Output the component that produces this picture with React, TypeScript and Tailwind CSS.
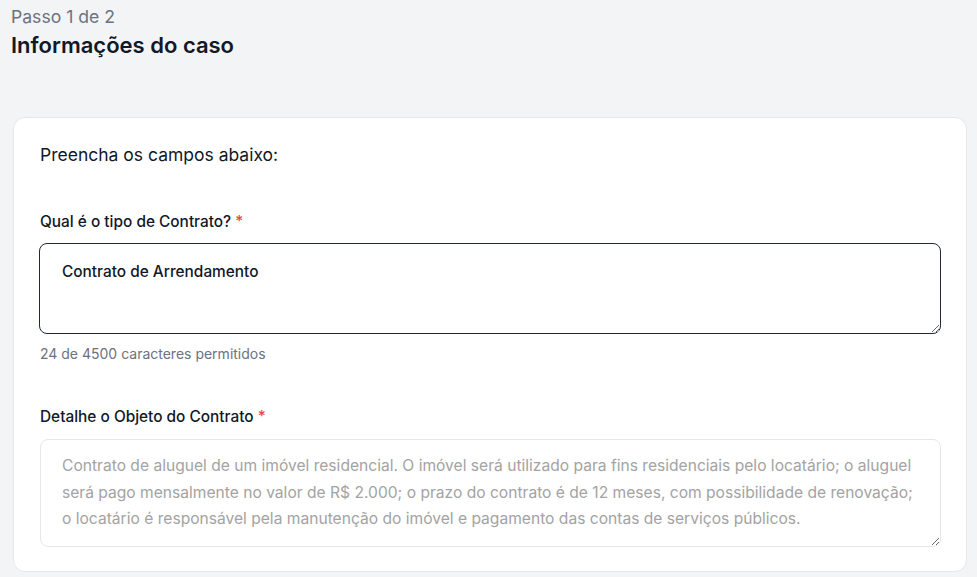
export default function App() {
  return (
    <div
      className="min-h-[577px] bg-[#f3f4f6] pt-[6px] pb-[6px]"
      style={{ fontFamily: 'Inter, "Noto Sans", sans-serif' }}
    >
      <div className="px-[11px]">
        <p className="text-[17.6px] leading-[22px] text-[#6b7280]">Passo 1 de 2</p>
        <h1 className="mt-[3px] text-[22px] leading-[28px] font-semibold text-[#111827]">
          Informações do caso
        </h1>
      </div>

      <div className="ml-[13px] mr-[10px] mt-[58px] rounded-[12px] border border-[#e5e7eb] bg-white px-[25px] pt-[25px] pb-[24px]">
        <p className="pl-[1px] text-[17.5px] leading-[24px] text-[#111827]">Preencha os campos abaixo:</p>

        <label className="mt-[45px] block pl-[1px] text-[15.4px] leading-[20px] font-medium text-[#111827]">
          Qual é o tipo de Contrato? <span className="text-[#ef4444]">*</span>
        </label>
        <textarea
          autoFocus
          defaultValue="Contrato de Arrendamento"
          className="mt-[11px] block h-[91px] w-full rounded-[8px] border-[1.5px] border-[#1f2937] bg-white px-[22px] pt-[16px] text-[15.4px] leading-[24px] font-medium text-[#111827] outline-none"
        />
        <p className="mt-[11px] pl-[1px] text-[14px] leading-[18px] text-[#6b7280]">
          24 de 4500 caracteres permitidos
        </p>

        <label className="mt-[44px] block pl-[1px] text-[15.4px] leading-[20px] font-medium text-[#111827]">
          Detalhe o Objeto do Contrato <span className="text-[#ef4444]">*</span>
        </label>
        <textarea
          placeholder="Contrato de aluguel de um imóvel residencial. O imóvel será utilizado para fins residenciais pelo locatário; o aluguel será pago mensalmente no valor de R$ 2.000; o prazo do contrato é de 12 meses, com possibilidade de renovação; o locatário é responsável pela manutenção do imóvel e pagamento das contas de serviços públicos."
          className="mt-[12px] ml-[1px] block h-[108px] w-[calc(100%-1px)] rounded-[8px] border border-[#e5e7eb] bg-white px-[21px] pt-[13px] text-[15.6px] leading-[26.5px] text-[#111827] placeholder:text-[#a3a3a3] outline-none"
        />
      </div>
    </div>
  );
}
